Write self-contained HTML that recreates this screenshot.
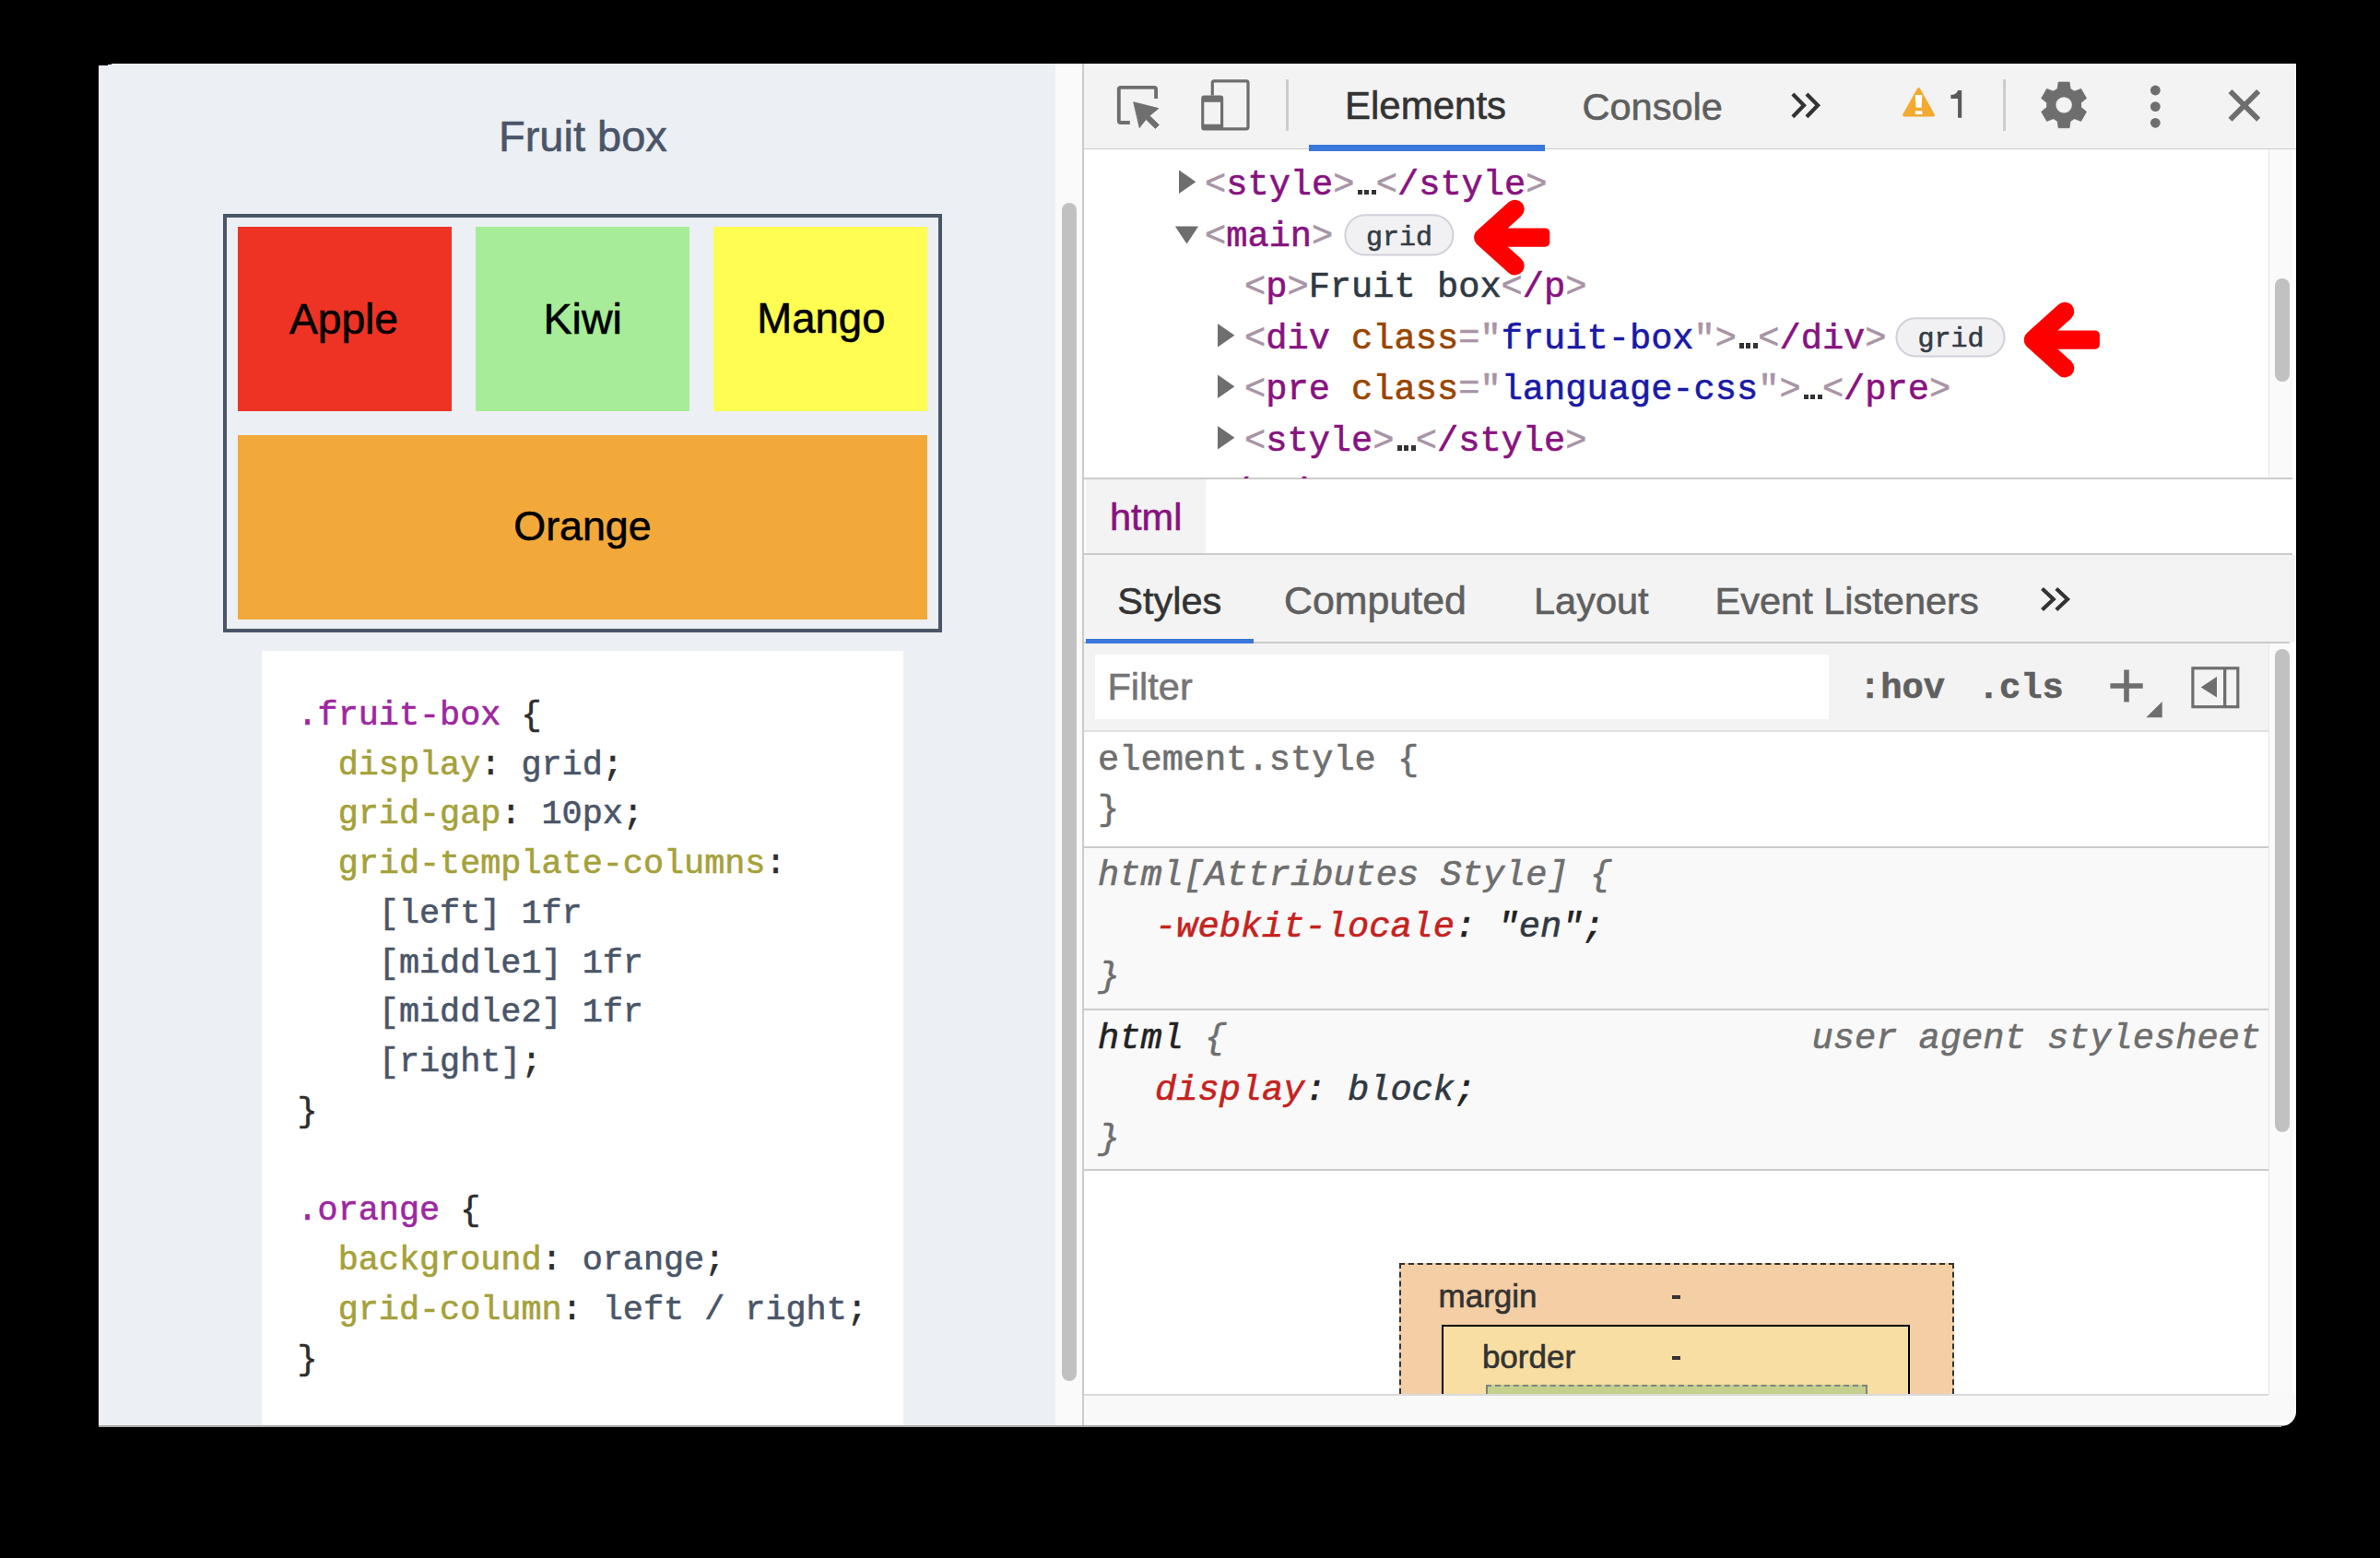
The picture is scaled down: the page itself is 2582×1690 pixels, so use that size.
<!DOCTYPE html>
<html><head><meta charset="utf-8"><style>
html,body{margin:0;padding:0;}
body{width:2582px;height:1690px;background:#000;position:relative;overflow:hidden;}
.r,.t{position:absolute;}
.t{white-space:pre;-webkit-text-stroke:0.6px currentColor;}
</style></head><body>
<div class="r" style="left:107px;top:69px;width:2384px;height:1479px;background:#fff;"></div>
<div class="r" style="left:107px;top:69px;width:1038px;height:1477px;background:#ECEFF3;"></div>
<div class="r" style="left:107px;top:69px;width:1px;height:1477px;background:#F8F9FB;"></div>
<div class="r" style="left:107px;top:69px;width:10px;height:2px;background:#000;"></div>
<div class="r" style="left:117px;top:69px;width:4px;height:1px;background:#000;"></div>
<div class="t" style="left:541.00px;top:123.91px;font-family:'Liberation Sans',sans-serif;font-size:47px;line-height:47px;"><span style="color:#4A5568;-webkit-text-stroke:0.6px #4A5568">Fruit box</span></div>
<div class="r" style="left:242px;top:232px;width:780px;height:454px;background:transparent;border:4px solid #4A5568;box-sizing:border-box;"></div>
<div class="r" style="left:258px;top:246px;width:232px;height:200px;background:#EE3325;"></div>
<div class="r" style="left:516px;top:246px;width:232px;height:200px;background:#A7EC98;"></div>
<div class="r" style="left:774px;top:246px;width:232px;height:200px;background:#FFFD52;"></div>
<div class="r" style="left:258px;top:472px;width:748px;height:200px;background:#F2A93A;"></div>
<div class="t" style="left:173px;width:400px;text-align:center;top:322.89px;font-family:'Liberation Sans',sans-serif;font-size:46.2px;line-height:46.2px;color:#000">Apple</div>
<div class="t" style="left:432.20000000000005px;width:400px;text-align:center;top:322.64px;font-family:'Liberation Sans',sans-serif;font-size:46.5px;line-height:46.5px;color:#000">Kiwi</div>
<div class="t" style="left:690.9px;width:400px;text-align:center;top:323.48px;font-family:'Liberation Sans',sans-serif;font-size:45.5px;line-height:45.5px;color:#000">Mango</div>
<div class="t" style="left:432px;width:400px;text-align:center;top:548.08px;font-family:'Liberation Sans',sans-serif;font-size:44.8px;line-height:44.8px;color:#000">Orange</div>
<div class="r" style="left:284px;top:706px;width:696px;height:840px;background:#fff;"></div>
<div class="t" style="left:322.50px;top:757.79px;font-family:'Liberation Mono',monospace;font-size:36.8px;line-height:36.8px;white-space:pre;"><span style="color:#9D27A0;-webkit-text-stroke:0.6px #9D27A0">.fruit-box</span><span style="color:#2D2D2D;-webkit-text-stroke:0.6px #2D2D2D"> {</span></div>
<div class="t" style="left:322.50px;top:811.54px;font-family:'Liberation Mono',monospace;font-size:36.8px;line-height:36.8px;white-space:pre;"><span style="color:#A5A13A;-webkit-text-stroke:0.6px #A5A13A">  display</span><span style="color:#2D2D2D;-webkit-text-stroke:0.6px #2D2D2D">: </span><span style="color:#4A5568;-webkit-text-stroke:0.6px #4A5568">grid</span><span style="color:#2D2D2D;-webkit-text-stroke:0.6px #2D2D2D">;</span></div>
<div class="t" style="left:322.50px;top:865.29px;font-family:'Liberation Mono',monospace;font-size:36.8px;line-height:36.8px;white-space:pre;"><span style="color:#A5A13A;-webkit-text-stroke:0.6px #A5A13A">  grid-gap</span><span style="color:#2D2D2D;-webkit-text-stroke:0.6px #2D2D2D">: </span><span style="color:#4A5568;-webkit-text-stroke:0.6px #4A5568">10px</span><span style="color:#2D2D2D;-webkit-text-stroke:0.6px #2D2D2D">;</span></div>
<div class="t" style="left:322.50px;top:919.04px;font-family:'Liberation Mono',monospace;font-size:36.8px;line-height:36.8px;white-space:pre;"><span style="color:#A5A13A;-webkit-text-stroke:0.6px #A5A13A">  grid-template-columns</span><span style="color:#2D2D2D;-webkit-text-stroke:0.6px #2D2D2D">:</span></div>
<div class="t" style="left:322.50px;top:972.79px;font-family:'Liberation Mono',monospace;font-size:36.8px;line-height:36.8px;white-space:pre;"><span style="color:#4A5568;-webkit-text-stroke:0.6px #4A5568">    [left] 1fr</span></div>
<div class="t" style="left:322.50px;top:1026.54px;font-family:'Liberation Mono',monospace;font-size:36.8px;line-height:36.8px;white-space:pre;"><span style="color:#4A5568;-webkit-text-stroke:0.6px #4A5568">    [middle1] 1fr</span></div>
<div class="t" style="left:322.50px;top:1080.29px;font-family:'Liberation Mono',monospace;font-size:36.8px;line-height:36.8px;white-space:pre;"><span style="color:#4A5568;-webkit-text-stroke:0.6px #4A5568">    [middle2] 1fr</span></div>
<div class="t" style="left:322.50px;top:1134.04px;font-family:'Liberation Mono',monospace;font-size:36.8px;line-height:36.8px;white-space:pre;"><span style="color:#4A5568;-webkit-text-stroke:0.6px #4A5568">    [right]</span><span style="color:#2D2D2D;-webkit-text-stroke:0.6px #2D2D2D">;</span></div>
<div class="t" style="left:322.50px;top:1187.79px;font-family:'Liberation Mono',monospace;font-size:36.8px;line-height:36.8px;white-space:pre;"><span style="color:#2D2D2D;-webkit-text-stroke:0.6px #2D2D2D">}</span></div>
<div class="t" style="left:322.50px;top:1295.29px;font-family:'Liberation Mono',monospace;font-size:36.8px;line-height:36.8px;white-space:pre;"><span style="color:#9D27A0;-webkit-text-stroke:0.6px #9D27A0">.orange</span><span style="color:#2D2D2D;-webkit-text-stroke:0.6px #2D2D2D"> {</span></div>
<div class="t" style="left:322.50px;top:1349.04px;font-family:'Liberation Mono',monospace;font-size:36.8px;line-height:36.8px;white-space:pre;"><span style="color:#A5A13A;-webkit-text-stroke:0.6px #A5A13A">  background</span><span style="color:#2D2D2D;-webkit-text-stroke:0.6px #2D2D2D">: </span><span style="color:#4A5568;-webkit-text-stroke:0.6px #4A5568">orange</span><span style="color:#2D2D2D;-webkit-text-stroke:0.6px #2D2D2D">;</span></div>
<div class="t" style="left:322.50px;top:1402.79px;font-family:'Liberation Mono',monospace;font-size:36.8px;line-height:36.8px;white-space:pre;"><span style="color:#A5A13A;-webkit-text-stroke:0.6px #A5A13A">  grid-column</span><span style="color:#2D2D2D;-webkit-text-stroke:0.6px #2D2D2D">: </span><span style="color:#4A5568;-webkit-text-stroke:0.6px #4A5568">left / right</span><span style="color:#2D2D2D;-webkit-text-stroke:0.6px #2D2D2D">;</span></div>
<div class="t" style="left:322.50px;top:1456.54px;font-family:'Liberation Mono',monospace;font-size:36.8px;line-height:36.8px;white-space:pre;"><span style="color:#2D2D2D;-webkit-text-stroke:0.6px #2D2D2D">}</span></div>
<div class="r" style="left:1145px;top:69px;width:29px;height:1477px;background:#FAFAFA;"></div>
<div class="r" style="left:1152px;top:220px;width:16px;height:1278px;background:#C1C1C1;border-radius:8px;"></div>
<div class="r" style="left:1174px;top:69px;width:2px;height:1477px;background:#CBCBCB;"></div>
<div class="r" style="left:1176px;top:69px;width:1315px;height:92px;background:#F3F3F3;"></div>
<div class="r" style="left:1176px;top:161px;width:1315px;height:1px;background:#CBCBCB;"></div>
<div class="r" style="left:1176px;top:162px;width:1285px;height:357px;background:#fff;"></div>
<div class="r" style="left:2461px;top:162px;width:26px;height:357px;background:#FAFAFA;"></div>
<div class="r" style="left:2468px;top:302px;width:16px;height:112px;background:#C1C1C1;border-radius:8px;"></div>
<div class="r" style="left:1176px;top:518px;width:1311px;height:2px;background:#CBCBCB;"></div>
<div class="r" style="left:1176px;top:520px;width:1315px;height:80px;background:#fff;"></div>
<div class="r" style="left:1178px;top:520px;width:130px;height:80px;background:#F3F3F3;"></div>
<div class="r" style="left:1176px;top:600px;width:1311px;height:2px;background:#CBCBCB;"></div>
<div class="r" style="left:1176px;top:602px;width:1315px;height:95px;background:#F3F3F3;"></div>
<div class="r" style="left:1176px;top:696px;width:1308px;height:2px;background:#CBCBCB;"></div>
<div class="r" style="left:1178px;top:693px;width:182px;height:7px;background:#3A77DB;"></div>
<div class="r" style="left:1176px;top:698px;width:1285px;height:95px;background:#F3F3F3;"></div>
<div class="r" style="left:1188px;top:710px;width:796px;height:70px;background:#fff;"></div>
<div class="r" style="left:1176px;top:792px;width:1285px;height:2px;background:#E0E0E0;"></div>
<div class="r" style="left:1176px;top:794px;width:1285px;height:124px;background:#fff;"></div>
<div class="r" style="left:1176px;top:918px;width:1285px;height:2px;background:#CBCBCB;"></div>
<div class="r" style="left:1176px;top:920px;width:1285px;height:174px;background:#F9F9F9;"></div>
<div class="r" style="left:1176px;top:1094px;width:1285px;height:2px;background:#CBCBCB;"></div>
<div class="r" style="left:1176px;top:1096px;width:1285px;height:172px;background:#F9F9F9;"></div>
<div class="r" style="left:1176px;top:1268px;width:1285px;height:2px;background:#CBCBCB;"></div>
<div class="r" style="left:1176px;top:1270px;width:1285px;height:242px;background:#fff;"></div>
<div class="r" style="left:2461px;top:698px;width:26px;height:814px;background:#FAFAFA;"></div>
<div class="r" style="left:2468px;top:704px;width:16px;height:524px;background:#C1C1C1;border-radius:8px;"></div>
<div class="r" style="left:1176px;top:1512px;width:1315px;height:30px;background:#F9F9F9;"></div>
<div class="r" style="left:1176px;top:1512px;width:1285px;height:2px;background:#DADADA;"></div>
<div class="r" style="left:107px;top:1546px;width:2384px;height:2px;background:#A8A8A8;"></div>
<div class="t" style="left:1459.00px;top:94.45px;font-family:'Liberation Sans',sans-serif;font-size:42px;line-height:42px;"><span style="color:#333333;-webkit-text-stroke:0.6px #333333">Elements</span></div>
<div class="t" style="left:1716.50px;top:94.87px;font-family:'Liberation Sans',sans-serif;font-size:41.5px;line-height:41.5px;"><span style="color:#5F5F5F;-webkit-text-stroke:0.6px #5F5F5F">Console</span></div>
<div class="r" style="left:1420px;top:157px;width:256px;height:7px;background:#3A77DB;"></div>
<div class="r" style="left:1395px;top:86px;width:3px;height:56px;background:#CCCCCC;"></div>
<div class="r" style="left:2173px;top:86px;width:3px;height:56px;background:#CCCCCC;"></div>
<div class="t" style="left:1307.00px;top:182.34px;font-family:'Liberation Mono',monospace;font-size:38.7px;line-height:38.7px;white-space:pre;"><span style="color:#A894A6;-webkit-text-stroke:0.6px #A894A6">&lt;</span><span style="color:#881280;-webkit-text-stroke:0.6px #881280">style</span><span style="color:#A894A6;-webkit-text-stroke:0.6px #A894A6">&gt;</span><span style="display:inline-block;width:23.220px;height:5.4px;vertical-align:0;background:linear-gradient(90deg,transparent 0 2.6px,#333333 2.6px 8.0px,transparent 8.0px 10.1px,#333333 10.1px 15.5px,transparent 15.5px 17.6px,#333333 17.6px 23.0px,transparent 23.0px)"></span><span style="color:#A894A6;-webkit-text-stroke:0.6px #A894A6">&lt;</span><span style="color:#881280;-webkit-text-stroke:0.6px #881280">/style</span><span style="color:#A894A6;-webkit-text-stroke:0.6px #A894A6">&gt;</span></div>
<div class="t" style="left:1307.00px;top:237.84px;font-family:'Liberation Mono',monospace;font-size:38.7px;line-height:38.7px;white-space:pre;"><span style="color:#A894A6;-webkit-text-stroke:0.6px #A894A6">&lt;</span><span style="color:#881280;-webkit-text-stroke:0.6px #881280">main</span><span style="color:#A894A6;-webkit-text-stroke:0.6px #A894A6">&gt;</span></div>
<div class="t" style="left:1350.00px;top:293.34px;font-family:'Liberation Mono',monospace;font-size:38.7px;line-height:38.7px;white-space:pre;"><span style="color:#A894A6;-webkit-text-stroke:0.6px #A894A6">&lt;</span><span style="color:#881280;-webkit-text-stroke:0.6px #881280">p</span><span style="color:#A894A6;-webkit-text-stroke:0.6px #A894A6">&gt;</span><span style="color:#303942;-webkit-text-stroke:0.6px #303942">Fruit box</span><span style="color:#A894A6;-webkit-text-stroke:0.6px #A894A6">&lt;</span><span style="color:#881280;-webkit-text-stroke:0.6px #881280">/p</span><span style="color:#A894A6;-webkit-text-stroke:0.6px #A894A6">&gt;</span></div>
<div class="t" style="left:1350.00px;top:348.84px;font-family:'Liberation Mono',monospace;font-size:38.7px;line-height:38.7px;white-space:pre;"><span style="color:#A894A6;-webkit-text-stroke:0.6px #A894A6">&lt;</span><span style="color:#881280;-webkit-text-stroke:0.6px #881280">div</span><span style="color:#303942;-webkit-text-stroke:0.6px #303942"> </span><span style="color:#994500;-webkit-text-stroke:0.6px #994500">class</span><span style="color:#A894A6;-webkit-text-stroke:0.6px #A894A6">=&quot;</span><span style="color:#1A1AA6;-webkit-text-stroke:0.6px #1A1AA6">fruit-box</span><span style="color:#A894A6;-webkit-text-stroke:0.6px #A894A6">&quot;</span><span style="color:#A894A6;-webkit-text-stroke:0.6px #A894A6">&gt;</span><span style="display:inline-block;width:23.220px;height:5.4px;vertical-align:0;background:linear-gradient(90deg,transparent 0 2.6px,#333333 2.6px 8.0px,transparent 8.0px 10.1px,#333333 10.1px 15.5px,transparent 15.5px 17.6px,#333333 17.6px 23.0px,transparent 23.0px)"></span><span style="color:#A894A6;-webkit-text-stroke:0.6px #A894A6">&lt;</span><span style="color:#881280;-webkit-text-stroke:0.6px #881280">/div</span><span style="color:#A894A6;-webkit-text-stroke:0.6px #A894A6">&gt;</span></div>
<div class="t" style="left:1350.00px;top:404.34px;font-family:'Liberation Mono',monospace;font-size:38.7px;line-height:38.7px;white-space:pre;"><span style="color:#A894A6;-webkit-text-stroke:0.6px #A894A6">&lt;</span><span style="color:#881280;-webkit-text-stroke:0.6px #881280">pre</span><span style="color:#303942;-webkit-text-stroke:0.6px #303942"> </span><span style="color:#994500;-webkit-text-stroke:0.6px #994500">class</span><span style="color:#A894A6;-webkit-text-stroke:0.6px #A894A6">=&quot;</span><span style="color:#1A1AA6;-webkit-text-stroke:0.6px #1A1AA6">language-css</span><span style="color:#A894A6;-webkit-text-stroke:0.6px #A894A6">&quot;</span><span style="color:#A894A6;-webkit-text-stroke:0.6px #A894A6">&gt;</span><span style="display:inline-block;width:23.220px;height:5.4px;vertical-align:0;background:linear-gradient(90deg,transparent 0 2.6px,#333333 2.6px 8.0px,transparent 8.0px 10.1px,#333333 10.1px 15.5px,transparent 15.5px 17.6px,#333333 17.6px 23.0px,transparent 23.0px)"></span><span style="color:#A894A6;-webkit-text-stroke:0.6px #A894A6">&lt;</span><span style="color:#881280;-webkit-text-stroke:0.6px #881280">/pre</span><span style="color:#A894A6;-webkit-text-stroke:0.6px #A894A6">&gt;</span></div>
<div class="t" style="left:1350.00px;top:459.84px;font-family:'Liberation Mono',monospace;font-size:38.7px;line-height:38.7px;white-space:pre;"><span style="color:#A894A6;-webkit-text-stroke:0.6px #A894A6">&lt;</span><span style="color:#881280;-webkit-text-stroke:0.6px #881280">style</span><span style="color:#A894A6;-webkit-text-stroke:0.6px #A894A6">&gt;</span><span style="display:inline-block;width:23.220px;height:5.4px;vertical-align:0;background:linear-gradient(90deg,transparent 0 2.6px,#333333 2.6px 8.0px,transparent 8.0px 10.1px,#333333 10.1px 15.5px,transparent 15.5px 17.6px,#333333 17.6px 23.0px,transparent 23.0px)"></span><span style="color:#A894A6;-webkit-text-stroke:0.6px #A894A6">&lt;</span><span style="color:#881280;-webkit-text-stroke:0.6px #881280">/style</span><span style="color:#A894A6;-webkit-text-stroke:0.6px #A894A6">&gt;</span></div>
<div class="t" style="left:1212.30px;top:631.27px;font-family:'Liberation Sans',sans-serif;font-size:41.5px;line-height:41.5px;"><span style="color:#333333;-webkit-text-stroke:0.6px #333333">Styles</span></div>
<div class="t" style="left:1393.00px;top:630.09px;font-family:'Liberation Sans',sans-serif;font-size:42.9px;line-height:42.9px;"><span style="color:#5F5F5F;-webkit-text-stroke:0.6px #5F5F5F">Computed</span></div>
<div class="t" style="left:1664.00px;top:631.27px;font-family:'Liberation Sans',sans-serif;font-size:41.5px;line-height:41.5px;"><span style="color:#5F5F5F;-webkit-text-stroke:0.6px #5F5F5F">Layout</span></div>
<div class="t" style="left:1860.60px;top:631.17px;font-family:'Liberation Sans',sans-serif;font-size:41.5px;line-height:41.5px;"><span style="color:#5F5F5F;-webkit-text-stroke:0.6px #5F5F5F">Event Listeners</span></div>
<div class="t" style="left:1204.00px;top:540.47px;font-family:'Liberation Sans',sans-serif;font-size:41.5px;line-height:41.5px;"><span style="color:#881280;-webkit-text-stroke:0.6px #881280">html</span></div>
<div class="t" style="left:1201.50px;top:724.47px;font-family:'Liberation Sans',sans-serif;font-size:41.5px;line-height:41.5px;"><span style="color:#757575;-webkit-text-stroke:0.6px #757575">Filter</span></div>
<div class="t" style="left:2017.00px;top:727.76px;font-family:'Liberation Mono',monospace;font-size:38.8px;line-height:38.8px;font-weight:bold;white-space:pre;"><span style="color:#5F5F5F;-webkit-text-stroke:0.6px #5F5F5F">:hov</span></div>
<div class="t" style="left:2145.70px;top:727.76px;font-family:'Liberation Mono',monospace;font-size:38.8px;line-height:38.8px;font-weight:bold;white-space:pre;"><span style="color:#5F5F5F;-webkit-text-stroke:0.6px #5F5F5F">.cls</span></div>
<div class="t" style="left:1191.00px;top:805.84px;font-family:'Liberation Mono',monospace;font-size:38.7px;line-height:38.7px;white-space:pre;"><span style="color:#6E6E6E;-webkit-text-stroke:0.6px #6E6E6E">element.style {</span></div>
<div class="t" style="left:1191.00px;top:859.84px;font-family:'Liberation Mono',monospace;font-size:38.7px;line-height:38.7px;white-space:pre;"><span style="color:#6E6E6E;-webkit-text-stroke:0.6px #6E6E6E">}</span></div>
<div class="t" style="left:1191.00px;top:931.34px;font-family:'Liberation Mono',monospace;font-size:38.7px;line-height:38.7px;font-style:italic;white-space:pre;"><span style="color:#6E6E6E;-webkit-text-stroke:0.6px #6E6E6E">html[Attributes Style] {</span></div>
<div class="t" style="left:1253.00px;top:987.34px;font-family:'Liberation Mono',monospace;font-size:38.7px;line-height:38.7px;font-style:italic;white-space:pre;"><span style="color:#C5221F;-webkit-text-stroke:0.6px #C5221F">-webkit-locale</span><span style="color:#222222;-webkit-text-stroke:0.6px #222222">: </span><span style="color:#222222;-webkit-text-stroke:0.6px #222222">&quot;</span><span style="color:#303942;-webkit-text-stroke:0.6px #303942">en</span><span style="color:#222222;-webkit-text-stroke:0.6px #222222">&quot;</span><span style="color:#222222;-webkit-text-stroke:0.6px #222222">;</span></div>
<div class="t" style="left:1191.48px;top:1041.34px;font-family:'Liberation Mono',monospace;font-size:38.7px;line-height:38.7px;font-style:italic;white-space:pre;"><span style="color:#6E6E6E;-webkit-text-stroke:0.6px #6E6E6E">}</span></div>
<div class="t" style="left:1191.00px;top:1107.74px;font-family:'Liberation Mono',monospace;font-size:38.7px;line-height:38.7px;font-style:italic;white-space:pre;"><span style="color:#222222;-webkit-text-stroke:0.6px #222222">html</span><span style="color:#6E6E6E;-webkit-text-stroke:0.6px #6E6E6E"> {</span></div>
<div class="t" style="left:1253.00px;top:1163.94px;font-family:'Liberation Mono',monospace;font-size:38.7px;line-height:38.7px;font-style:italic;white-space:pre;"><span style="color:#C5221F;-webkit-text-stroke:0.6px #C5221F">display</span><span style="color:#222222;-webkit-text-stroke:0.6px #222222">: </span><span style="color:#303942;-webkit-text-stroke:0.6px #303942">block</span><span style="color:#222222;-webkit-text-stroke:0.6px #222222">;</span></div>
<div class="t" style="left:1191.48px;top:1217.34px;font-family:'Liberation Mono',monospace;font-size:38.7px;line-height:38.7px;font-style:italic;white-space:pre;"><span style="color:#6E6E6E;-webkit-text-stroke:0.6px #6E6E6E">}</span></div>
<div class="t" style="left:1965.50px;top:1108.34px;font-family:'Liberation Mono',monospace;font-size:38.7px;line-height:38.7px;font-style:italic;white-space:pre;"><span style="color:#6E6E6E;-webkit-text-stroke:0.6px #6E6E6E">user agent stylesheet</span></div>
<div class="r" style="left:1518px;top:1370px;width:602px;height:142px;background:#F4CEA5;border:2px dashed #333;border-bottom:none;box-sizing:border-box;"></div>
<div class="t" style="left:1560.60px;top:1388.07px;font-family:'Liberation Sans',sans-serif;font-size:35px;line-height:35px;"><span style="color:#333333;-webkit-text-stroke:0.6px #333333">margin</span></div>
<div class="r" style="left:1814px;top:1405px;width:9px;height:4px;background:#333;"></div>
<div class="r" style="left:1564px;top:1437px;width:508px;height:75px;background:#F8DEA2;border:2px solid #000;border-bottom:none;box-sizing:border-box;"></div>
<div class="t" style="left:1607.90px;top:1454.17px;font-family:'Liberation Sans',sans-serif;font-size:35px;line-height:35px;"><span style="color:#333333;-webkit-text-stroke:0.6px #333333">border</span></div>
<div class="r" style="left:1814px;top:1471px;width:9px;height:4px;background:#333;"></div>
<div class="r" style="left:1612px;top:1502px;width:414px;height:10px;background:#C4D08C;border:2px dashed #808080;border-bottom:none;box-sizing:border-box;"></div>
<svg style="position:absolute;left:0;top:0" width="2582" height="1690" viewBox="0 0 2582 1690"><path d="M1254.1,106.9 V96.8 a2,2 0 0 0 -2,-2 H1215.8 a2,2 0 0 0 -2,2 V131 a2,2 0 0 0 2,2 H1225.8" fill="none" stroke="#6E6E6E" stroke-width="3.85"/><path d="M1229.7,110.7 L1257,117.6 L1247.2,125.6 L1257.4,135.4 L1253.4,139.4 L1243.2,129.6 L1236.2,138.6 Z" fill="#6E6E6E" stroke="#6E6E6E" stroke-width="0.8" stroke-linejoin="round"/><path d="M1315.3,103.6 V89.9 a2,2 0 0 1 2,-2 H1352 a2,2 0 0 1 2,2 V137.8 a2,2 0 0 1 -2,2 H1327" fill="none" stroke="#6E6E6E" stroke-width="3.2"/><path d="M1306.2,103.6 H1324.2 a3,3 0 0 1 3,3 V141.5 H1306.2 a3,3 0 0 1 -3,-3 V106.6 a3,3 0 0 1 3,-3 Z M1306.3,110.7 V134.8 H1324 V110.7 Z" fill="#6E6E6E" fill-rule="evenodd"/><path d="M1944.9,102.0 L1957.0,114.3 L1944.9,126.7 M1960.0,102.0 L1972.1,114.3 L1960.0,126.7" fill="none" stroke="#333333" stroke-width="4.2"/><path d="M2215.5,638.5 L2227.7,650.0 L2215.5,661.5 M2230.8,638.5 L2243.0,650.0 L2230.8,661.5" fill="none" stroke="#333333" stroke-width="4.2"/><path d="M2081.5,96.8 L2097.2,124.8 H2065.9 Z" fill="#F2AA30" stroke="#F2AA30" stroke-width="3.6" stroke-linejoin="round"/><path d="M2077.8,103 H2085.4 L2084.6,116.8 H2078.6 Z M2077.8,120.2 H2085.4 V124.1 H2077.8 Z" fill="#fff"/><path d="M2124.1,97.9 H2128.2 V127.7 H2124.1 V106.9 H2116.4 V103 C2120.2,103 2122.9,101.2 2124.1,97.9 Z" fill="#5A5A5A"/><circle cx="2239.1" cy="113.9" r="19" fill="#6E6E6E"/><path d="M2231.80,97.90 L2233.20,89.10 L2245.00,89.10 L2246.40,97.90 Z" fill="#6E6E6E" stroke="#6E6E6E" stroke-width="0.8" stroke-linejoin="round"/><path d="M2249.31,99.58 L2257.63,96.39 L2263.53,106.61 L2256.61,112.22 Z" fill="#6E6E6E" stroke="#6E6E6E" stroke-width="0.8" stroke-linejoin="round"/><path d="M2256.61,115.58 L2263.53,121.19 L2257.63,131.41 L2249.31,128.22 Z" fill="#6E6E6E" stroke="#6E6E6E" stroke-width="0.8" stroke-linejoin="round"/><path d="M2246.40,129.90 L2245.00,138.70 L2233.20,138.70 L2231.80,129.90 Z" fill="#6E6E6E" stroke="#6E6E6E" stroke-width="0.8" stroke-linejoin="round"/><path d="M2228.89,128.22 L2220.57,131.41 L2214.67,121.19 L2221.59,115.58 Z" fill="#6E6E6E" stroke="#6E6E6E" stroke-width="0.8" stroke-linejoin="round"/><path d="M2221.59,112.22 L2214.67,106.61 L2220.57,96.39 L2228.89,99.58 Z" fill="#6E6E6E" stroke="#6E6E6E" stroke-width="0.8" stroke-linejoin="round"/><circle cx="2239.1" cy="113.9" r="8.7" fill="#F3F3F3"/><circle cx="2338.3" cy="98" r="5.4" fill="#6E6E6E"/><circle cx="2338.3" cy="115.6" r="5.4" fill="#6E6E6E"/><circle cx="2338.3" cy="133.3" r="5.4" fill="#6E6E6E"/><path d="M2419.5,99 L2450.2,129.7 M2450.2,99 L2419.5,129.7" stroke="#6E6E6E" stroke-width="5.8"/><path d="M1279,184.4 L1297.4,197.2 L1279,209.9 Z" fill="#6E6E6E"/><path d="M1274.9,245.6 H1300.1 L1287.5,264.6 Z" fill="#6E6E6E"/><path d="M1321,350.9 L1339.4,363.7 L1321,376.4 Z" fill="#6E6E6E"/><path d="M1321,406.4 L1339.4,419.2 L1321,431.9 Z" fill="#6E6E6E"/><path d="M1321,461.9 L1339.4,474.7 L1321,487.4 Z" fill="#6E6E6E"/><rect x="1459.4" y="233.3" width="117.0" height="43.1" rx="21.5" fill="#F1F1F4" stroke="#D3CED7" stroke-width="2"/><rect x="2057.4" y="345.3" width="117.1" height="41.1" rx="20.5" fill="#F1F1F4" stroke="#D3CED7" stroke-width="2"/><path d="M1643.5,226.9 L1609.3,257.6 L1643.5,288.3" fill="none" stroke="#FF0000" stroke-width="20.4" stroke-linecap="round" stroke-linejoin="round"/><rect x="1609.3" y="247.4" width="72.0" height="20.4" rx="5" fill="#FF0000"/><path d="M2240.1,337.9 L2205.9,368.6 L2240.1,399.3" fill="none" stroke="#FF0000" stroke-width="20.4" stroke-linecap="round" stroke-linejoin="round"/><rect x="2205.9" y="358.4" width="72.0" height="20.4" rx="5" fill="#FF0000"/><path d="M2307,726.6 V761.4 M2289.4,744 H2324.7" stroke="#6E6E6E" stroke-width="5.6"/><path d="M2328.3,778.2 L2345.7,761 V778.2 Z" fill="#6E6E6E"/><rect x="2378.9" y="724.8" width="48.9" height="41.9" fill="none" stroke="#6E6E6E" stroke-width="3.2"/><rect x="2412" y="724.8" width="3.3" height="41.9" fill="#6E6E6E"/><path d="M2387.7,745.4 L2405,734 V756.6 Z" fill="#6E6E6E"/></svg>
<div style="position:absolute;left:1176px;top:162px;width:1285px;height:357px;overflow:hidden"><div class="t" style="left:134px;top:353.84px;font-family:'Liberation Mono',monospace;font-size:38.7px;line-height:38.7px;"><span style="color:#A894A6;-webkit-text-stroke:0.6px #A894A6">&lt;</span><span style="color:#881280;-webkit-text-stroke:0.6px #881280">/main</span><span style="color:#A894A6;-webkit-text-stroke:0.6px #A894A6">&gt;</span></div></div>
<div class="r" style="left:2461px;top:162px;width:1px;height:357px;background:#E6E6E6;"></div>
<div class="r" style="left:2461px;top:698px;width:1px;height:815px;background:#E6E6E6;"></div>
<div style="position:absolute;left:2475px;top:1531px;width:17px;height:17px;background:radial-gradient(circle at 0 0, transparent 15.5px, #000 16.5px)"></div>
<div class="t" style="left:1482.00px;top:242.90px;font-family:'Liberation Mono',monospace;font-size:30px;line-height:30px;"><span style="color:#333C44;-webkit-text-stroke:0.6px #333C44">grid</span></div>
<div class="t" style="left:2080.50px;top:353.00px;font-family:'Liberation Mono',monospace;font-size:30px;line-height:30px;"><span style="color:#333C44;-webkit-text-stroke:0.6px #333C44">grid</span></div>
</body></html>
